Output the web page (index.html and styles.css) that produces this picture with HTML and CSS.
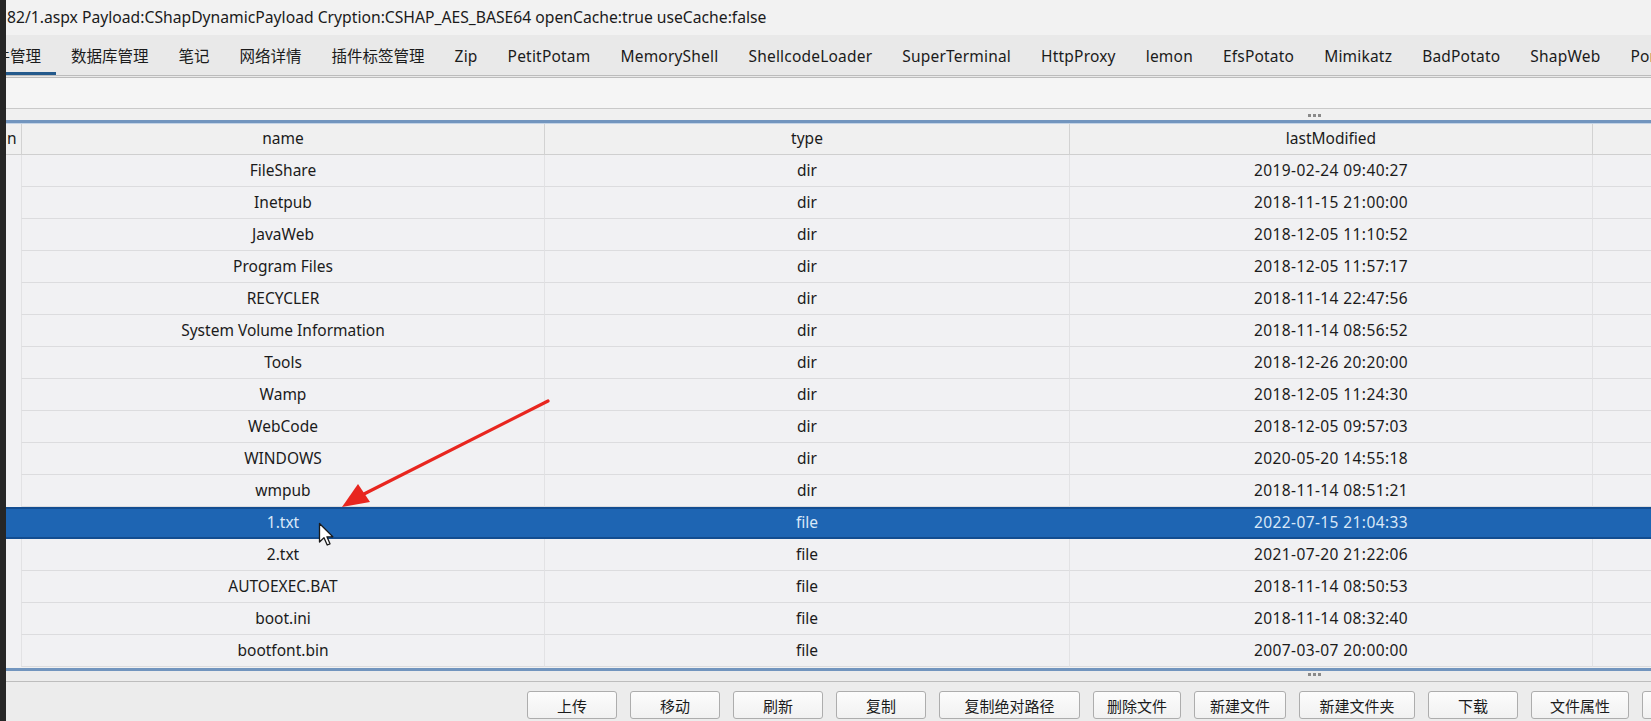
FILE: index.html
```html
<!DOCTYPE html>
<html lang="zh">
<head>
<meta charset="utf-8">
<title>文件管理</title>
<link rel="stylesheet" href="styles.css">
</head>
<body>
<div class="app">
  <div class="strip"></div>
  <div class="main">
    <div class="titlebar">82/1.aspx Payload:CShapDynamicPayload Cryption:CSHAP_AES_BASE64 openCache:true useCache:false</div>
    <div class="tabs">
      <div class="tab tab-first active">文件管理</div>
      <div class="tab">数据库管理</div>
      <div class="tab">笔记</div>
      <div class="tab">网络详情</div>
      <div class="tab">插件标签管理</div>
      <div class="tab tab-en">Zip</div>
      <div class="tab tab-en">PetitPotam</div>
      <div class="tab tab-en">MemoryShell</div>
      <div class="tab tab-en">ShellcodeLoader</div>
      <div class="tab tab-en">SuperTerminal</div>
      <div class="tab tab-en">HttpProxy</div>
      <div class="tab tab-en">lemon</div>
      <div class="tab tab-en">EfsPotato</div>
      <div class="tab tab-en">Mimikatz</div>
      <div class="tab tab-en">BadPotato</div>
      <div class="tab tab-en">ShapWeb</div>
      <div class="tab tab-en">PortScan</div>
    </div>
    <div class="toolbar"></div>
    <div class="splitter splitter-top"><span class="dots"></span></div>
    <div class="table">
      <div class="row head">
        <div class="cell c0">n</div><div class="cell">name</div><div class="cell">type</div><div class="cell">lastModified</div><div class="cell clast"></div>
      </div>
      <div class="row"><div class="cell c0"></div><div class="cell">FileShare</div><div class="cell">dir</div><div class="cell date">2019-02-24 09:40:27</div><div class="cell clast"></div></div>
      <div class="row"><div class="cell c0"></div><div class="cell">Inetpub</div><div class="cell">dir</div><div class="cell date">2018-11-15 21:00:00</div><div class="cell clast"></div></div>
      <div class="row"><div class="cell c0"></div><div class="cell">JavaWeb</div><div class="cell">dir</div><div class="cell date">2018-12-05 11:10:52</div><div class="cell clast"></div></div>
      <div class="row"><div class="cell c0"></div><div class="cell">Program Files</div><div class="cell">dir</div><div class="cell date">2018-12-05 11:57:17</div><div class="cell clast"></div></div>
      <div class="row"><div class="cell c0"></div><div class="cell">RECYCLER</div><div class="cell">dir</div><div class="cell date">2018-11-14 22:47:56</div><div class="cell clast"></div></div>
      <div class="row"><div class="cell c0"></div><div class="cell">System Volume Information</div><div class="cell">dir</div><div class="cell date">2018-11-14 08:56:52</div><div class="cell clast"></div></div>
      <div class="row"><div class="cell c0"></div><div class="cell">Tools</div><div class="cell">dir</div><div class="cell date">2018-12-26 20:20:00</div><div class="cell clast"></div></div>
      <div class="row"><div class="cell c0"></div><div class="cell">Wamp</div><div class="cell">dir</div><div class="cell date">2018-12-05 11:24:30</div><div class="cell clast"></div></div>
      <div class="row"><div class="cell c0"></div><div class="cell">WebCode</div><div class="cell">dir</div><div class="cell date">2018-12-05 09:57:03</div><div class="cell clast"></div></div>
      <div class="row"><div class="cell c0"></div><div class="cell">WINDOWS</div><div class="cell">dir</div><div class="cell date">2020-05-20 14:55:18</div><div class="cell clast"></div></div>
      <div class="row"><div class="cell c0"></div><div class="cell">wmpub</div><div class="cell">dir</div><div class="cell date">2018-11-14 08:51:21</div><div class="cell clast"></div></div>
      <div class="row selected"><div class="cell c0"></div><div class="cell">1.txt</div><div class="cell">file</div><div class="cell date">2022-07-15 21:04:33</div><div class="cell clast"></div></div>
      <div class="row"><div class="cell c0"></div><div class="cell">2.txt</div><div class="cell">file</div><div class="cell date">2021-07-20 21:22:06</div><div class="cell clast"></div></div>
      <div class="row"><div class="cell c0"></div><div class="cell">AUTOEXEC.BAT</div><div class="cell">file</div><div class="cell date">2018-11-14 08:50:53</div><div class="cell clast"></div></div>
      <div class="row"><div class="cell c0"></div><div class="cell">boot.ini</div><div class="cell">file</div><div class="cell date">2018-11-14 08:32:40</div><div class="cell clast"></div></div>
      <div class="row"><div class="cell c0"></div><div class="cell">bootfont.bin</div><div class="cell">file</div><div class="cell date">2007-03-07 20:00:00</div><div class="cell clast"></div></div>
    </div>
    <div class="splitter splitter-bottom"><span class="dots"></span></div>
    <div class="buttons">
      <button class="btn">上传</button>
      <button class="btn">移动</button>
      <button class="btn">刷新</button>
      <button class="btn">复制</button>
      <button class="btn btn-xl">复制绝对路径</button>
      <button class="btn btn-s">删除文件</button>
      <button class="btn btn-m">新建文件</button>
      <button class="btn btn-l">新建文件夹</button>
      <button class="btn">下载</button>
      <button class="btn btn-ml">文件属性</button>
      <button class="btn">编辑</button>
    </div>
  </div>
</div>
<svg class="arrow" width="240" height="130" viewBox="0 0 240 130">
  <line x1="230" y1="3" x2="44" y2="97" stroke="#e8261f" stroke-width="3.2" stroke-linecap="round"/>
  <polygon points="24,109 40,86 52,104" fill="#e8261f"/>
</svg>
<svg class="cursor" width="18" height="26" viewBox="0 0 18 26">
  <path d="M1.5 1.5 L1.5 20 L6 15.8 L9.2 23 L12 21.8 L8.9 14.8 L14.8 14.8 Z" fill="#ffffff" stroke="#1a1a1a" stroke-width="1.3" stroke-linejoin="round"/>
</svg>
</body>
</html>
```
FILE: styles.css
```css
* { box-sizing: border-box; }
html, body { margin: 0; padding: 0; }
body {
  width: 1651px;
  height: 721px;
  overflow: hidden;
  background: #f0f0f0;
  font-family: "Noto Sans", "Noto Sans CJK SC", sans-serif;
  color: #1b1b1b;
  position: relative;
}
.app { display: flex; height: 721px; }
.strip { width: 6px; flex: none; background: #262626; }
.main { flex: 1; min-width: 0; display: flex; flex-direction: column; overflow: hidden; background: #f1f1f1; }

.titlebar {
  height: 35px;
  line-height: 35px;
  font-size: 15.7px;
  padding-left: 1px;
  white-space: nowrap;
  background: #f2f2f2;
}

.tabs {
  height: 43px;
  display: flex;
  align-items: stretch;
  background: #e9e9e9;
  border-bottom: 3px double #bcbcbc;
  white-space: nowrap;
}
.tab {
  padding: 3px 15px 0;
  font-size: 15.5px;
  line-height: 37px;
  flex: none;
  color: #1b1b1b;
}
.tab-en { letter-spacing: 0.2px; }
.tab-first { margin-left: -42px; }
.tab.active { box-shadow: inset 0 -3px 0 #245a8c; }

.toolbar {
  height: 31px;
  background: #f5f5f5;
  border-bottom: 1px solid #c9c9c9;
}

.splitter { position: relative; flex: none; }
.splitter-top {
  height: 14px;
  background: #f0f0f0;
  border-bottom: 3px solid #7295be;
  box-shadow: 0 1px 0 #c3d3e6;
}
.splitter-top .dots { position: absolute; left: 1302px; top: 5px; }
.dots {
  display: block;
  width: 13px;
  height: 3px;
  background: repeating-linear-gradient(to right, #8a8a8a 0 3px, transparent 3px 5px);
}

.table { flex: none; background: #f1f1f3; }
.row {
  display: grid;
  grid-template-columns: 15px 523px 525px 523px 1fr;
  height: 32px;
}
.cell {
  font-size: 15.5px;
  line-height: 31px;
  text-align: center;
  white-space: nowrap;
  overflow: hidden;
  border-bottom: 1px solid #dcdcde;
  border-left: 1px solid #e2e2e4;
}
.cell.date { letter-spacing: 0.4px; }
.cell.c0 { border-left: none; border-bottom-color: transparent; text-align: left; }
.head { height: 32px; background: #f0f0f0; }
.head .cell {
  border-bottom: 1px solid #cfcfcf;
  border-left: 1px solid #d2d2d2;
  line-height: 31px;
}
.head .cell.c0 { border-left: none; border-bottom-color: #cfcfcf; padding-left: 1px; }
.selected { background: #1e65b3; color: #d9e8f8; box-shadow: inset 0 2px 0 #134d90, inset 0 -2px 0 #134d90; }
.selected .cell { border-color: transparent; }

.splitter-bottom {
  height: 14px;
  margin-top: 1px;
  background: #ececec;
  border-top: 3px solid #7295be;
  border-bottom: 1px solid #bdbdbd;
}
.splitter-bottom .dots { position: absolute; left: 1302px; top: 2px; }

.buttons {
  flex: 1;
  display: flex;
  gap: 13px;
  padding: 9px 0 0 521px;
  background: #ececec;
  overflow: hidden;
}
.btn {
  flex: none;
  width: 90px;
  height: 28px;
  border: 1px solid #adadad;
  border-radius: 3px;
  background: linear-gradient(#fcfcfc, #f1f1f1);
  font-family: "Noto Sans CJK SC", sans-serif;
  font-size: 15px;
  color: #1b1b1b;
  padding: 0;
  white-space: nowrap;
}
.btn-xl { width: 141px; }
.btn-s { width: 88px; }
.btn-m { width: 92px; }
.btn-l { width: 116px; }
.btn-ml { width: 98px; }

.arrow { position: absolute; left: 318px; top: 398px; }
.cursor { position: absolute; left: 318px; top: 522px; }
```
